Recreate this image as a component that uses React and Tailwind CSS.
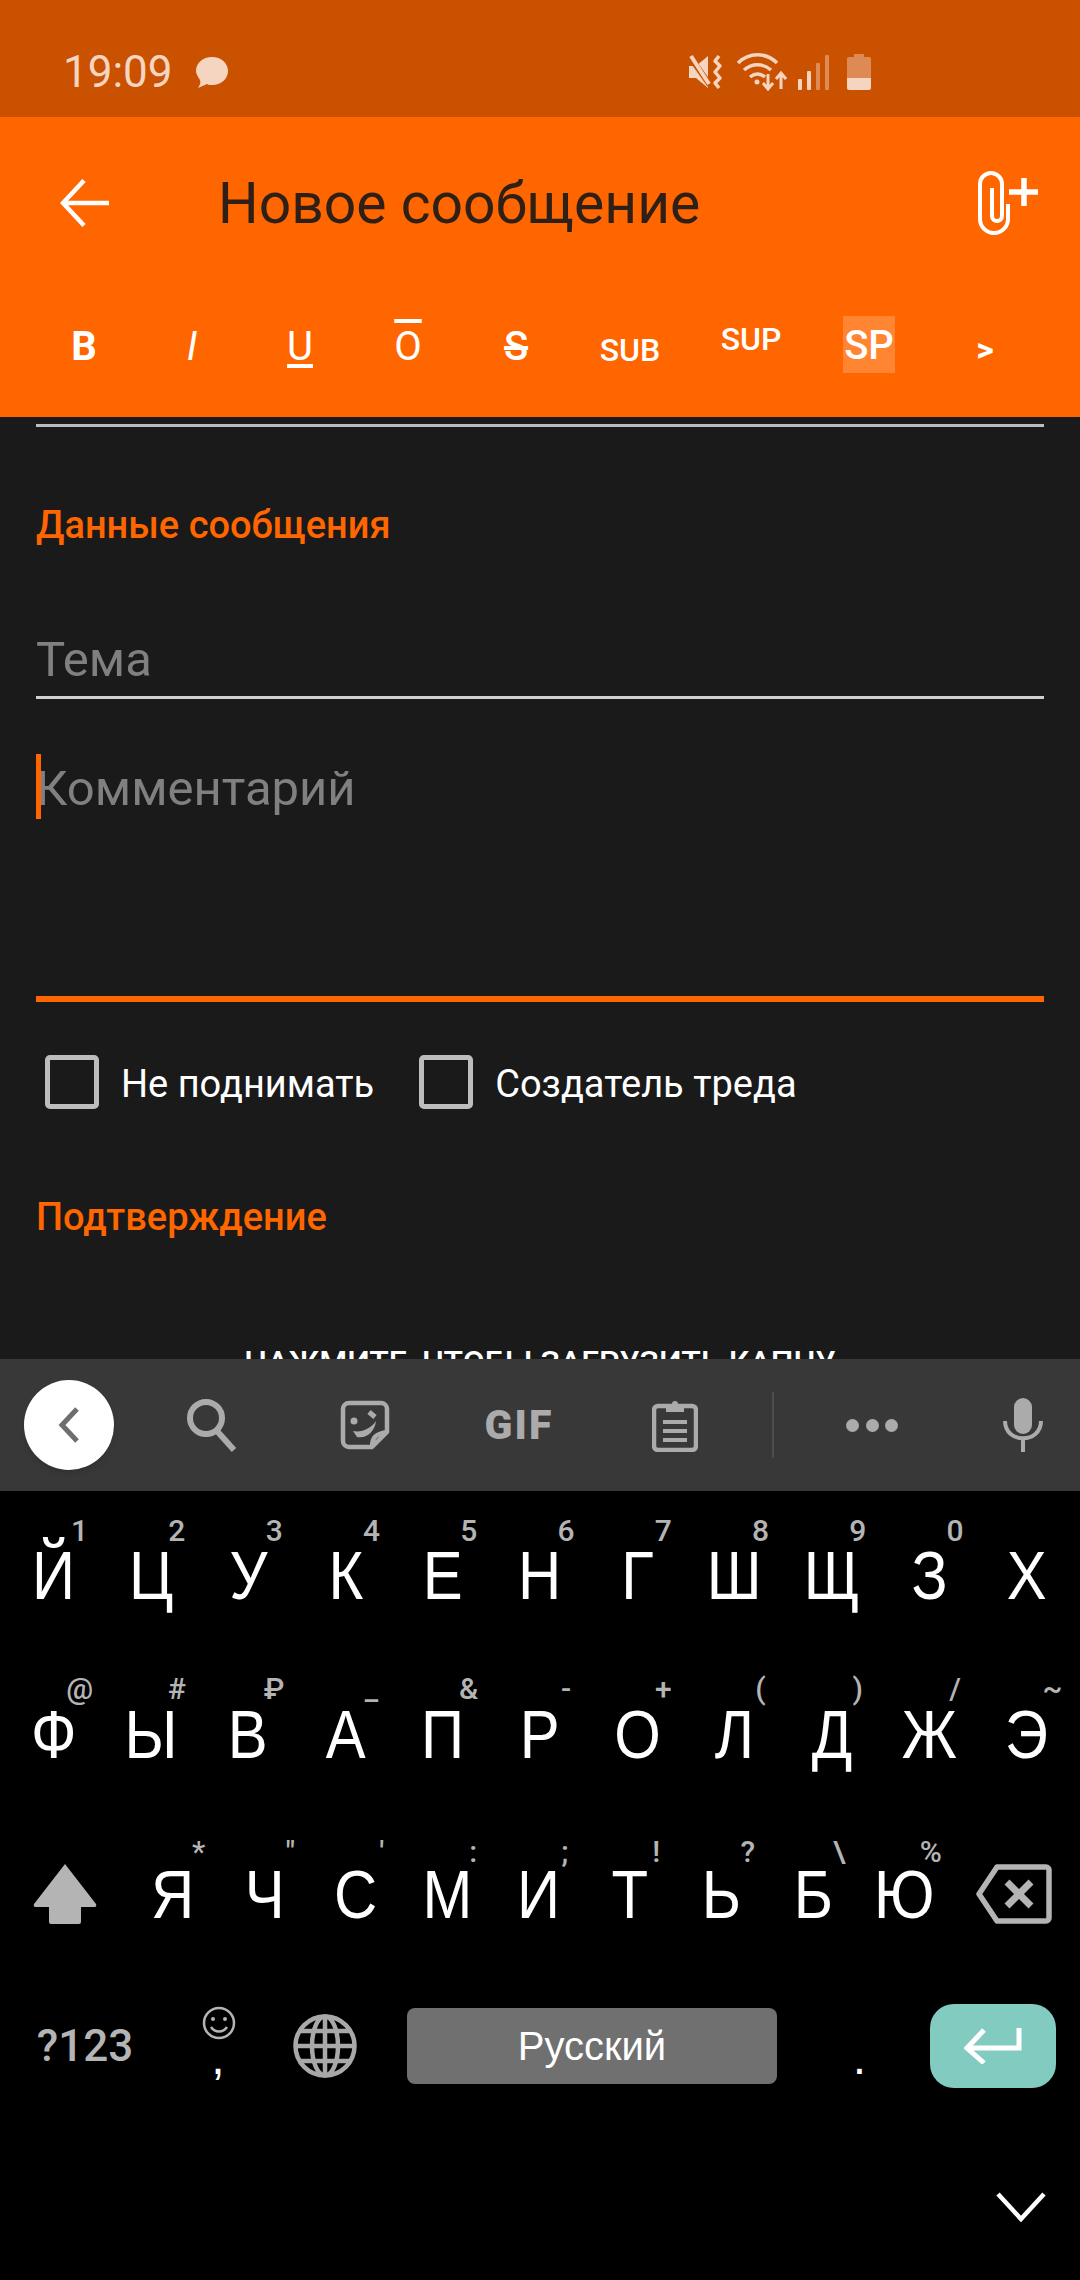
import React from 'react';

const row1 = [['Й', '1'], ['Ц', '2'], ['У', '3'], ['К', '4'], ['Е', '5'], ['Н', '6'], ['Г', '7'], ['Ш', '8'], ['Щ', '9'], ['З', '0'], ['Х', '']];
const row2 = [['Ф', '@'], ['Ы', '#'], ['В', '₽'], ['А', '_'], ['П', '&'], ['Р', '-'], ['О', '+'], ['Л', '('], ['Д', ')'], ['Ж', '/'], ['Э', '~']];
const row3 = [['Я', '*'], ['Ч', '"'], ['С', "'"], ['М', ':'], ['И', ';'], ['Т', '!'], ['Ь', '?'], ['Б', '\\'], ['Ю', '%']];

const Key = ({ letter, hint }) => (
    <div className="relative flex h-full items-center justify-center text-[68px] leading-none text-white">
        <span className="scale-x-[0.88]">{letter}</span>
        {hint && (
            <span className="absolute left-[calc(50%+26px)] top-[15px] -translate-x-1/2 font-[Roboto,sans-serif] text-[30px] font-medium leading-[40px] text-[#b4b4b4]">{hint}</span>
        )}
    </div>
);

const StatusIcons = () => (
    <div className="ml-auto mr-[209px] flex items-center">
        {/* vibrate */}
        <svg width="37" height="36" viewBox="0 0 37 36" fill="none" className="mr-[12px]">
            <path d="M1 12h7L20 2v32L8 24H1z" fill="#f5d5c0" />
            <path d="M2 3l20 28" stroke="#c95100" strokeWidth="6" />
            <path d="M3 2l18 28" stroke="#f5d5c0" strokeWidth="4" />
            <path d="M31 2l-4 5 5 5-5 6 5 6-5 5 4 5" stroke="#f5d5c0" strokeWidth="3.5" strokeLinejoin="round" />
        </svg>
        {/* wifi */}
        <svg width="50" height="38" viewBox="0 0 50 38" fill="none" stroke="#f5d5c0" strokeWidth="3.5" className="mr-[10px]">
            <path d="M1 10c11-11 28-11 39 0" />
            <path d="M7 17c8-7 19-7 27 0" />
            <path d="M13 24c5-4 10-4 15 0" />
            <circle cx="20" cy="29" r="2.5" fill="#f5d5c0" stroke="none" />
            <path d="M31 21v14M26 30l5 6 5-6" strokeWidth="3" />
            <path d="M44 36V20M39 26l5-6 5 6" strokeWidth="3" />
        </svg>
        {/* signal */}
        <svg width="32" height="36" viewBox="0 0 32 36" className="mr-[18px]">
            <rect x="1" y="25" width="4" height="11" rx="1" fill="#f5d5c0" />
            <rect x="10" y="17" width="4" height="19" rx="1" fill="#f5d5c0" />
            <rect x="19" y="9" width="4" height="27" rx="1" fill="#dd8a54" />
            <rect x="28" y="1" width="4" height="35" rx="1" fill="#dd8a54" />
        </svg>
        {/* battery */}
        <svg width="24" height="36" viewBox="0 0 24 36">
            <path d="M7 0h10v3h5a2 2 0 0 1 2 2v19H0V5a2 2 0 0 1 2-2h5z" fill="#dd8a54" />
            <path d="M0 24h24v10a2 2 0 0 1-2 2H2a2 2 0 0 1-2-2z" fill="#f5d5c0" />
        </svg>
    </div>
);

const Header = () => (
    <div className="bg-[#ff6600]">
        <div className="flex h-[172px] items-center pl-[60px] pr-[40px]">
            <svg width="50" height="48" viewBox="0 0 50 48" fill="none" stroke="#fff" strokeWidth="4.5" className="shrink-0">
                <path d="M49 24H4M24 1.5L3 24l21 22.5" />
            </svg>
            <div className="ml-[108px] text-[57px] leading-none text-[#2e2016]">Новое сообщение</div>
            <svg width="62" height="66" viewBox="0 0 62 66" fill="none" stroke="#fff" strokeWidth="4" className="ml-auto">
                <path d="M30 34v15a14 14 0 0 1-28 0V14a11 11 0 0 1 22 0v32a5 5 0 0 1-10 0V18" />
                <path d="M46 8v28M31 22h29" strokeWidth="5.5" />
            </svg>
        </div>
        <div className="grid h-[128px] grid-cols-[108px_108px_108px_108px_108px_120px_122px_114px_118px] pl-[30px] text-white">
            <div className="flex h-[116px] items-center justify-center text-[40px] font-bold leading-none">B</div>
            <div className="flex h-[116px] items-center justify-center text-[40px] italic leading-none">I</div>
            <div className="flex h-[116px] items-center justify-center text-[40px] leading-none underline underline-offset-[4px]">U</div>
            <div className="flex h-[116px] items-center justify-center text-[40px] leading-none overline">O</div>
            <div className="flex h-[116px] items-center justify-center text-[40px] font-medium leading-none line-through">S</div>
            <div className="flex h-[116px] items-center justify-center pt-[5px] text-[32px] font-medium leading-none">SUB</div>
            <div className="flex h-[116px] items-center justify-center pb-[16px] text-[32px] font-medium leading-none">SUP</div>
            <div className="flex h-[111px] items-center justify-center">
                <span className="flex h-[57px] w-[52px] items-center justify-center bg-[#ff8533] pt-[3px] text-[40px] font-medium leading-none">SP</span>
            </div>
            <div className="flex h-[116px] items-center justify-center pt-[4px] text-[34px] font-bold leading-none">&gt;</div>
        </div>
    </div>
);

const Form = () => (
    <div className="h-[942px] overflow-hidden bg-[#1a1a1a] px-[36px] pt-[7px]">
        <div className="h-[3px] bg-[#bdbdbd]" />
        <div className="mt-[78px] text-[38px] font-medium leading-[40px] text-[#ff6600]">Данные сообщения</div>
        <div className="mt-[87px] text-[49px] leading-[56px] text-[#808080]">Тема</div>
        <div className="mt-[8px] h-[3px] bg-[#d0d0d0]" />
        <div className="relative mt-[62px] text-[49px] leading-[56px] text-[#808080]">
            Комментарий
            <span className="absolute -top-[7px] left-0 h-[65px] w-[5px] bg-[#ff6600]" />
        </div>
        <div className="mt-[179px] h-[6px] bg-[#ff6600]" />
        <div className="mt-[53px] flex items-center pl-[9px]">
            <span className="h-[54px] w-[54px] rounded-[5px] border-[5px] border-[#bdbdbd]" />
            <span className="ml-[22px] pt-[4px] text-[38px] leading-none text-white">Не поднимать</span>
            <span className="ml-[45px] h-[54px] w-[54px] rounded-[5px] border-[5px] border-[#bdbdbd]" />
            <span className="ml-[22px] pt-[4px] text-[38px] leading-none text-white">Создатель треда</span>
        </div>
        <div className="mt-[88px] text-[38px] font-medium leading-[40px] text-[#ff6600]">Подтверждение</div>
        <div className="mt-[105px] text-center text-[32px] font-medium leading-[40px] text-white">НАЖМИТЕ, ЧТОБЫ ЗАГРУЗИТЬ КАПЧУ</div>
    </div>
);

const SuggestBar = () => (
    <div className="flex h-[132px] items-center bg-[#383838] pl-[24px]">
        <div className="flex h-[90px] w-[90px] items-center justify-center rounded-full bg-white shadow-md">
            <svg width="24" height="38" viewBox="0 0 24 38" fill="none" stroke="#6e6e6e" strokeWidth="5">
                <path d="M20 3L5 19l15 16" />
            </svg>
        </div>
        <svg width="52" height="54" viewBox="0 0 52 54" fill="none" stroke="#ababab" strokeWidth="6" className="ml-[72px]">
            <circle cx="20" cy="20" r="16" />
            <path d="M31 33l17 19" />
        </svg>
        <svg width="50" height="50" viewBox="0 0 50 50" fill="none" stroke="#ababab" strokeWidth="4.5" className="ml-[102px]">
            <path d="M32 47H9a6 6 0 0 1-6-6V9a6 6 0 0 1 6-6h32a6 6 0 0 1 6 6v23L32 47c0-9 3-13 15-15" strokeLinejoin="round" />
            <circle cx="14" cy="21" r="3.5" fill="#ababab" stroke="none" />
            <path d="M29 12l6 5" strokeWidth="5" />
            <path d="M13 31c9 2 18-3 23-10-1 10-9 18-19 16z" fill="#ababab" stroke="none" />
        </svg>
        <div className="ml-[94px] w-[70px] text-center text-[41px] font-black leading-none tracking-[2px] text-[#ababab]">GIF</div>
        <svg width="46" height="54" viewBox="0 0 46 54" fill="none" stroke="#ababab" strokeWidth="4.5" className="ml-[98px]">
            <rect x="2" y="8" width="42" height="44" rx="4" />
            <path d="M14 6h6a3 3 0 0 1 6 0h6v8H14z" fill="#ababab" stroke="none" />
            <path d="M11 24h24M11 33h24M11 42h24" strokeWidth="4" />
        </svg>
        <div className="ml-[74px] h-[66px] w-[2px] bg-[#4d4d4d]" />
        <div className="ml-[72px] flex w-[52px] justify-between">
            <span className="h-[13px] w-[13px] rounded-full bg-[#ababab]" />
            <span className="h-[13px] w-[13px] rounded-full bg-[#ababab]" />
            <span className="h-[13px] w-[13px] rounded-full bg-[#ababab]" />
        </div>
        <svg width="40" height="54" viewBox="0 0 40 54" fill="none" stroke="#ababab" strokeWidth="4" className="ml-[105px]">
            <rect x="11" y="0" width="18" height="36" rx="9" fill="#ababab" stroke="none" />
            <path d="M2 23c0 23 36 23 36 0M20 41v13" />
        </svg>
    </div>
);

const Keyboard = () => (
    <div className="h-[789px] bg-black pt-[5px] font-['Liberation_Sans',sans-serif]">
        <div className="grid h-[158px] grid-cols-11 px-[5px]">
            {row1.map(([letter, hint]) => (
                <Key key={letter} letter={letter} hint={hint} />
            ))}
        </div>
        <div className="grid h-[159px] grid-cols-11 px-[5px]">
            {row2.map(([letter, hint]) => (
                <Key key={letter} letter={letter} hint={hint} />
            ))}
        </div>
        <div className="grid h-[158px] grid-cols-[127px_repeat(9,91.5px)_1fr] pt-[4px]">
            <div className="flex items-center pl-[33px]">
                <svg width="64" height="60" viewBox="0 0 64 60" fill="#b4b4b4">
                    <path d="M32 0L63 40a2 2 0 0 1-2 3H48v15a2 2 0 0 1-2 2H18a2 2 0 0 1-2-2V43H3a2 2 0 0 1-2-3z" />
                </svg>
            </div>
            {row3.map(([letter, hint]) => (
                <Key key={letter} letter={letter} hint={hint} />
            ))}
            <div className="flex items-center pl-[25px]">
                <svg width="76" height="60" viewBox="0 0 76 60" fill="none" stroke="#b4b4b4" strokeWidth="5.5">
                    <path d="M21 3h49a3 3 0 0 1 3 3v48a3 3 0 0 1-3 3H21L3 30z" strokeLinejoin="round" />
                    <path d="M31 18l24 24M55 18L31 42" strokeWidth="7" />
                </svg>
            </div>
        </div>
        <div className="-mt-[4px] flex h-[158px] items-center">
            <div className="w-[170px] text-center font-[Roboto,sans-serif] text-[44px] font-medium leading-none text-[#b4b4b4]">?123</div>
            <div className="relative flex h-full w-[96px] justify-center text-[48px] leading-none text-white">
                <span className="mt-[67px]">,</span>
                <svg width="34" height="34" viewBox="0 0 34 34" fill="none" stroke="#b4b4b4" strokeWidth="2.5" className="absolute left-[32px] top-[39px]">
                    <circle cx="17" cy="17" r="15" />
                    <circle cx="11" cy="13" r="2" fill="#b4b4b4" stroke="none" />
                    <circle cx="23" cy="13" r="2" fill="#b4b4b4" stroke="none" />
                    <path d="M9 21c4 6 12 6 16 0" />
                </svg>
            </div>
            <div className="flex w-[118px] justify-center">
                <svg width="64" height="64" viewBox="0 0 64 64" fill="none" stroke="#a8a8a8" strokeWidth="4.5">
                    <circle cx="32" cy="32" r="29.5" />
                    <ellipse cx="32" cy="32" rx="13" ry="29.5" />
                    <path d="M32 3v58M3 32h58M7 17h50M7 47h50" />
                </svg>
            </div>
            <div className="ml-[23px] flex h-[76px] w-[370px] items-center justify-center rounded-[8px] bg-[#707070] text-[40px] leading-none text-white">
                Русский
            </div>
            <div className="flex h-full w-[153px] justify-center pl-[12px] text-[48px] leading-none text-white">
                <span className="mt-[67px]">.</span>
            </div>
            <div className="flex h-[84px] w-[126px] items-center justify-center rounded-[24px] bg-[#82cbc1]">
                <svg width="58" height="36" viewBox="0 0 58 36" fill="none" stroke="#fff" strokeWidth="5">
                    <path d="M55 0v20H4M20 2L3 20l17 15" />
                </svg>
            </div>
        </div>
        <div className="flex justify-end pr-[34px] pt-[67px]">
            <svg width="50" height="30" viewBox="0 0 50 30" fill="none" stroke="#fff" strokeWidth="4.5">
                <path d="M2 2l23 25L48 2" />
            </svg>
        </div>
    </div>
);

export default function App() {
    return (
        <div className="flex h-[2280px] w-[1080px] flex-col overflow-hidden font-[Roboto,sans-serif]">
            <div className="flex h-[117px] items-center bg-[#c95100] pl-[63px] pt-[27px] text-[#f5d5c0]">
                <span className="text-[44px] leading-none">19:09</span>
                <svg width="34" height="33" viewBox="0 0 34 33" className="ml-[22px]" fill="#f5d5c0">
                    <path d="M17 1c9 0 16 6 16 14s-7 14-16 14c-2 0-4 0-5-1l-9 4c2-3 3-6 2-8-2-3-4-6-4-9C1 7 8 1 17 1z" />
                </svg>
                <StatusIcons />
            </div>
            <Header />
            <Form />
            <SuggestBar />
            <Keyboard />
        </div>
    );
}
